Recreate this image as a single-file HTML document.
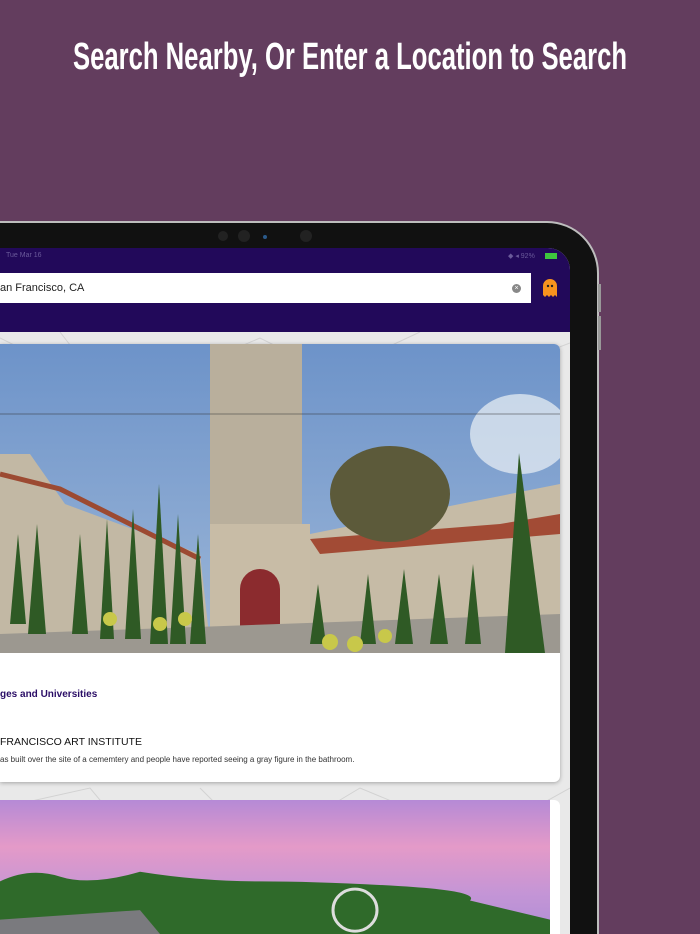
<!DOCTYPE html>
<html><head><meta charset="utf-8"><style>
*{margin:0;padding:0;box-sizing:border-box}
html,body{width:700px;height:934px;overflow:hidden}
body{background:#633d5e;position:relative;font-family:"Liberation Sans",sans-serif}
.title{position:absolute;top:36px;left:-100px;width:900px;text-align:center;color:#fff;font:bold 38px "Liberation Sans",sans-serif;transform:scaleX(.675);white-space:nowrap;transform-origin:center}
.dev{position:absolute;left:-60px;top:221px;width:659px;height:713px;background:#111;border-radius:52px 52px 0 0;border:2px solid #bdbdbd;border-bottom:none}
.btn{position:absolute;background:#999;width:3px}
.screen{position:absolute;left:0;top:248px;width:570px;height:686px;background:#e9e9e9;border-top-right-radius:22px;overflow:hidden}
.nav{position:absolute;left:0;top:0;width:570px;height:84px;background:#22095a}
.search{position:absolute;left:0;top:25px;width:531px;height:30px;background:#fff;font-size:11px;color:#222;padding:9px 0 0 0}
.card{position:absolute;left:0;top:96px;width:560px;height:438px;background:#fff;border-radius:0 6px 6px 0;box-shadow:0 1px 4px rgba(0,0,0,.3);overflow:hidden}
</style></head><body>
<div class="title">Search Nearby, Or Enter a Location to Search</div>
<div class="dev"></div>
<div class="btn" style="left:598px;top:284px;height:28px"></div>
<div class="btn" style="left:598px;top:316px;height:34px"></div>
<div style="position:absolute;left:218px;top:231px;width:10px;height:10px;border-radius:50%;background:#222"></div>
<div style="position:absolute;left:238px;top:230px;width:12px;height:12px;border-radius:50%;background:#222"></div>
<div style="position:absolute;left:263px;top:235px;width:4px;height:4px;border-radius:50%;background:#2a5a8a"></div>
<div style="position:absolute;left:300px;top:230px;width:12px;height:12px;border-radius:50%;background:#222"></div>
<div class="screen">
 <svg width="570" height="686" style="position:absolute;left:0;top:0" stroke="#d2d2d2" fill="none"><path d="M0 90L120 150 260 90 400 160 570 95M60 84L150 200 300 140 420 84M200 540L260 600 360 540 480 590 570 540M0 560L90 540 140 600"/></svg>
 <div class="nav">
  <div style="position:absolute;left:6px;top:4px;font-size:7px;color:#6a5a9a">Tue Mar 16</div>
  <div style="position:absolute;left:508px;top:4px;font-size:7px;color:#6a5a9a">◆ ◂ 92%</div>
  <div style="position:absolute;left:545px;top:5px;width:12px;height:6px;background:#3ec63e"></div>
  <div class="search">an Francisco, CA</div>
  <div style="position:absolute;left:512px;top:36px;width:9px;height:9px;border-radius:50%;background:#888;color:#fff;font-size:7px;line-height:9px;text-align:center">×</div>
  <svg style="position:absolute;left:542px;top:30px" width="16" height="20" viewBox="0 0 16 20"><path d="M1 8a7 7 0 0114 0v11l-2-2-2 2-2-2-2 2-2-2-2 2-2-2z" fill="#f7931e"/><circle cx="6" cy="8" r="1.2" fill="#222"/><circle cx="10" cy="8" r="1.2" fill="#222"/></svg>
 </div>
 <div class="card">
  <svg width="560" height="309" viewBox="0 0 560 309" preserveAspectRatio="none">
   <defs><linearGradient id="sky" x1="0" y1="0" x2="0" y2="1"><stop offset="0" stop-color="#6d93c9"/><stop offset="1" stop-color="#9db7d8"/></linearGradient></defs>
   <rect width="560" height="309" fill="url(#sky)"/>
   <ellipse cx="520" cy="90" rx="50" ry="40" fill="#dfe7f0" opacity=".8"/>
   <path d="M0 110L30 110 65 160 200 210 210 300 0 300Z" fill="#c2b8a4"/>
   <path d="M0 130L60 145 200 215" stroke="#9c4a32" stroke-width="5" fill="none"/>
   <rect x="210" y="0" width="92" height="200" fill="#b9af9c"/>
   <path d="M210 180h100v120H210z" fill="#c8bca6"/>
   <path d="M240 245a20 20 0 0140 0v55h-40z" fill="#8b2b2e"/>
   <path d="M310 190L560 140 560 300 310 300Z" fill="#c6bba6"/>
   <path d="M310 195L500 180 560 170 560 190 320 210Z" fill="#a24b35"/>
   <ellipse cx="390" cy="150" rx="60" ry="48" fill="#5c5a3a"/>
   <path d="M0 290L560 270 560 309 0 309Z" fill="#9c9890"/>
   <g fill="#2f5a25">
    <path d="M10 280l8-90 8 90z"/><path d="M28 290l9-110 9 110z"/><path d="M72 290l8-100 8 100z"/><path d="M100 295l7-120 7 120z"/><path d="M125 295l8-130 8 130z"/><path d="M150 300l9-160 9 160z"/><path d="M170 300l8-130 8 130z"/><path d="M190 300l8-110 8 110z"/>
    <path d="M310 300l8-60 8 60z"/><path d="M360 300l8-70 8 70z"/><path d="M395 300l9-75 9 75z"/><path d="M430 300l9-70 9 70z"/><path d="M465 300l8-80 8 80z"/><path d="M505 309l14-200 26 200z"/>
   </g>
   <g fill="#c8c84a"><circle cx="110" cy="275" r="7"/><circle cx="160" cy="280" r="7"/><circle cx="185" cy="275" r="7"/><circle cx="330" cy="298" r="8"/><circle cx="355" cy="300" r="8"/><circle cx="385" cy="292" r="7"/></g>
   <path d="M0 70L560 70" stroke="#333" stroke-width=".6"/>
  </svg>
  <div style="position:absolute;left:0;top:345px;font-weight:bold;font-size:10px;color:#2a0d66">ges and Universities</div>
  <div style="position:absolute;left:0;top:392px;font-size:10.5px;color:#111">FRANCISCO ART INSTITUTE</div>
  <div style="position:absolute;left:0;top:411px;font-size:8px;color:#333">as built over the site of a cememtery and people have reported seeing a gray figure in the bathroom.</div>
 </div>
 <div style="position:absolute;left:0;top:552px;width:560px;height:134px;background:#fff;border-radius:0 6px 0 0"></div>
 <svg style="position:absolute;left:0;top:552px" width="550" height="134" viewBox="0 0 550 140" preserveAspectRatio="none">
  <defs><linearGradient id="s2" x1="0" y1="0" x2="0" y2="1"><stop offset="0" stop-color="#b58ad6"/><stop offset=".35" stop-color="#e49ac8"/><stop offset=".7" stop-color="#c495d6"/><stop offset="1" stop-color="#b08ed6"/></linearGradient></defs>
  <rect width="550" height="140" fill="url(#s2)"/>
  <path d="M0 85Q30 70 60 80T140 75Q200 85 260 85T400 90T470 105L550 125V140H0Z" fill="#2f6a2a"/>
  <path d="M0 125L140 115 160 140H0Z" fill="#7a7a7e"/>
  <circle cx="355" cy="115" r="22" fill="none" stroke="#ddd" stroke-width="3"/>
 </svg>
</div>
</body></html>
